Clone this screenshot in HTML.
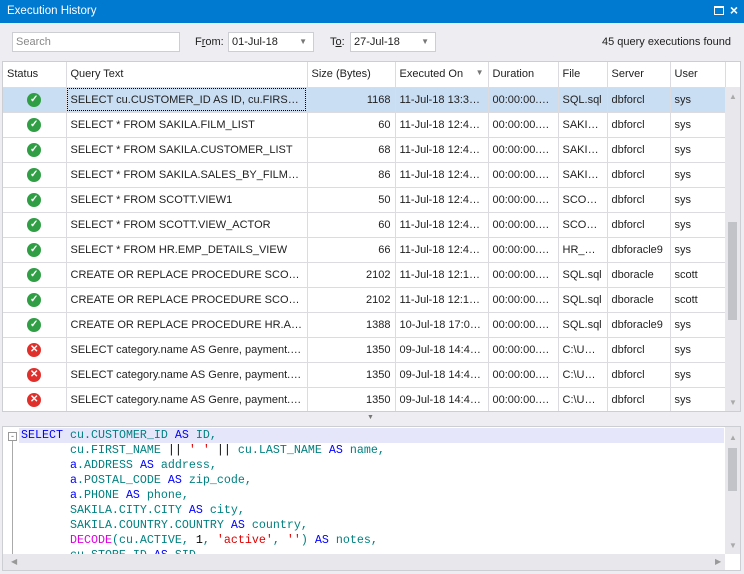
<!DOCTYPE html><html><head><style>
*{margin:0;padding:0;box-sizing:border-box}
body{width:744px;height:574px;background:#eeeef2;font-family:"Liberation Sans",sans-serif;font-size:11px;color:#1e1e1e;position:relative;overflow:hidden}
.abs{position:absolute}
.title{left:0;top:0;width:744px;height:23px;background:#0079d0;color:#fff;padding:5px 7px;font-size:11.5px}
.inp{background:#fff;border:1px solid #ccced4;height:20px;padding:3px 3px;font-size:11px}
.grid{left:2px;top:61px;width:739px;height:351px;background:#fff;border:1px solid #ccced4;overflow:hidden}
table{border-collapse:collapse;table-layout:fixed;font-size:11px}
td,th{height:25px;border-right:1px solid #dcdce0;border-bottom:1px solid #dcdce0;padding:0 4px;white-space:nowrap;overflow:hidden;text-overflow:ellipsis;font-weight:normal;text-align:left}
th{height:25px;background:#fff}
tr.sel td{background:#c9ddf3}
.r{text-align:right}
.ic{display:block;margin:auto;width:14px;height:14px;border-radius:50%;color:#fff;font-size:10px;line-height:14px;text-align:center;font-weight:bold}
.ok{background:#2f9e44}.er{background:#e0302c}
.code{left:2px;top:426px;width:739px;height:145px;background:#fff;border:1px solid #ccced4;overflow:hidden}
pre{font-family:"Liberation Mono",monospace;font-size:11.66px;line-height:15px;position:absolute;left:18px;top:1px;color:#008080}
.k{color:#0000ff}.s{color:#e00000}.m{color:#e000e0}.n{color:#000}
.sb{color:#aaa;font-size:8px}
</style></head><body>
<div class="abs title">Execution History<span class="abs" style="right:20px;top:6px;width:10px;height:9px;border:1px solid #fff;border-top-width:2px"></span><span class="abs" style="right:6px;top:2px;font-size:14px;font-weight:bold">×</span></div>
<div class="abs inp" style="left:12px;top:32px;width:168px;color:#888">Search</div>
<div class="abs" style="left:195px;top:36px">F<u>r</u>om:</div>
<div class="abs inp" style="left:228px;top:32px;width:86px">01-Jul-18<span class="abs" style="right:6px;top:4px;color:#777;font-size:8px">▼</span></div>
<div class="abs" style="left:330px;top:36px">T<u>o</u>:</div>
<div class="abs inp" style="left:350px;top:32px;width:86px">27-Jul-18<span class="abs" style="right:6px;top:4px;color:#777;font-size:8px">▼</span></div>
<div class="abs" style="right:13px;top:36px">45 query executions found</div>
<div class="abs grid">
<table style="width:722px">
<colgroup><col style="width:63px"><col style="width:241px"><col style="width:88px"><col style="width:93px"><col style="width:70px"><col style="width:49px"><col style="width:63px"><col style="width:55px"></colgroup>
<tr><th>Status</th><th>Query Text</th><th>Size (Bytes)</th><th>Executed On <span style="color:#777;font-size:8px;float:right">▼</span></th><th>Duration</th><th>File</th><th>Server</th><th>User</th></tr>
<tr class="sel"><td><span class="ic ok">✓</span></td><td style="outline:1px dotted #000;outline-offset:-2px">SELECT cu.CUSTOMER_ID AS ID, cu.FIRST_NAME</td><td class="r">1168</td><td>11-Jul-18 13:3…</td><td>00:00:00.…</td><td>SQL.sql</td><td>dbforcl</td><td>sys</td></tr>
<tr><td><span class="ic ok">✓</span></td><td>SELECT * FROM SAKILA.FILM_LIST</td><td class="r">60</td><td>11-Jul-18 12:4…</td><td>00:00:00.…</td><td>SAKI…</td><td>dbforcl</td><td>sys</td></tr>
<tr><td><span class="ic ok">✓</span></td><td>SELECT * FROM SAKILA.CUSTOMER_LIST</td><td class="r">68</td><td>11-Jul-18 12:4…</td><td>00:00:00.…</td><td>SAKI…</td><td>dbforcl</td><td>sys</td></tr>
<tr><td><span class="ic ok">✓</span></td><td>SELECT * FROM SAKILA.SALES_BY_FILM_CATEGORY</td><td class="r">86</td><td>11-Jul-18 12:4…</td><td>00:00:00.…</td><td>SAKI…</td><td>dbforcl</td><td>sys</td></tr>
<tr><td><span class="ic ok">✓</span></td><td>SELECT * FROM SCOTT.VIEW1</td><td class="r">50</td><td>11-Jul-18 12:4…</td><td>00:00:00.…</td><td>SCOT…</td><td>dbforcl</td><td>sys</td></tr>
<tr><td><span class="ic ok">✓</span></td><td>SELECT * FROM SCOTT.VIEW_ACTOR</td><td class="r">60</td><td>11-Jul-18 12:4…</td><td>00:00:00.…</td><td>SCOT…</td><td>dbforcl</td><td>sys</td></tr>
<tr><td><span class="ic ok">✓</span></td><td>SELECT * FROM HR.EMP_DETAILS_VIEW</td><td class="r">66</td><td>11-Jul-18 12:4…</td><td>00:00:00.…</td><td>HR_E…</td><td>dbforacle9</td><td>sys</td></tr>
<tr><td><span class="ic ok">✓</span></td><td>CREATE OR REPLACE PROCEDURE SCOTT.EMP_PROC</td><td class="r">2102</td><td>11-Jul-18 12:1…</td><td>00:00:00.…</td><td>SQL.sql</td><td>dboracle</td><td>scott</td></tr>
<tr><td><span class="ic ok">✓</span></td><td>CREATE OR REPLACE PROCEDURE SCOTT.EMP_PROC</td><td class="r">2102</td><td>11-Jul-18 12:1…</td><td>00:00:00.…</td><td>SQL.sql</td><td>dboracle</td><td>scott</td></tr>
<tr><td><span class="ic ok">✓</span></td><td>CREATE OR REPLACE PROCEDURE HR.ADD_JOB</td><td class="r">1388</td><td>10-Jul-18 17:0…</td><td>00:00:00.…</td><td>SQL.sql</td><td>dbforacle9</td><td>sys</td></tr>
<tr><td><span class="ic er">✕</span></td><td>SELECT category.name AS Genre, payment.amount</td><td class="r">1350</td><td>09-Jul-18 14:4…</td><td>00:00:00.…</td><td>C:\U…</td><td>dbforcl</td><td>sys</td></tr>
<tr><td><span class="ic er">✕</span></td><td>SELECT category.name AS Genre, payment.amount</td><td class="r">1350</td><td>09-Jul-18 14:4…</td><td>00:00:00.…</td><td>C:\U…</td><td>dbforcl</td><td>sys</td></tr>
<tr><td><span class="ic er">✕</span></td><td>SELECT category.name AS Genre, payment.amount</td><td class="r">1350</td><td>09-Jul-18 14:4…</td><td>00:00:00.…</td><td>C:\U…</td><td>dbforcl</td><td>sys</td></tr>
</table>
<div class="abs" style="left:722px;top:25px;width:16px;height:325px;background:#e8e8ec"></div>
<div class="abs sb" style="left:726px;top:30px">▲</div>
<div class="abs sb" style="left:726px;top:336px">▼</div>
<div class="abs" style="left:725px;top:160px;width:9px;height:98px;background:#c2c3c9"></div>
</div>
<div class="abs" style="left:367px;top:414px;color:#777;font-size:7px">▼</div>
<div class="abs code">
<div class="abs" style="left:16px;top:1px;width:705px;height:15px;background:#e6e6fa"></div>
<div class="abs" style="left:5px;top:5px;width:9px;height:9px;border:1px solid #999;background:#fff;font-size:9px;line-height:6px;text-align:center;color:#666">-</div>
<div class="abs" style="left:9px;top:14px;width:1px;height:115px;background:#aaa"></div>
<pre><span class="k">SELECT</span> cu.CUSTOMER_ID <span class="k">AS</span> ID,
       cu.FIRST_NAME <span class="n">||</span> <span class="s">' '</span> <span class="n">||</span> cu.LAST_NAME <span class="k">AS</span> name,
       <span class="k">a</span>.ADDRESS <span class="k">AS</span> address,
       <span class="k">a</span>.POSTAL_CODE <span class="k">AS</span> zip_code,
       <span class="k">a</span>.PHONE <span class="k">AS</span> phone,
       SAKILA.CITY.CITY <span class="k">AS</span> city,
       SAKILA.COUNTRY.COUNTRY <span class="k">AS</span> country,
       <span class="m">DECODE</span>(cu.ACTIVE, <span class="n">1</span>, <span class="s">'active'</span>, <span class="s">''</span>) <span class="k">AS</span> notes,
       cu.STORE_ID <span class="k">AS</span> SID</pre>
<div class="abs" style="left:722px;top:0;width:16px;height:127px;background:#e8e8ec"></div>
<div class="abs sb" style="left:726px;top:6px">▲</div>
<div class="abs sb" style="left:726px;top:114px">▼</div>
<div class="abs" style="left:725px;top:21px;width:9px;height:43px;background:#c2c3c9"></div>
<div class="abs" style="left:0;top:127px;width:722px;height:17px;background:#e8e8ec"></div>
<div class="abs" style="left:8px;top:130px;color:#999;font-size:8px">◀</div>
<div class="abs" style="left:712px;top:130px;color:#999;font-size:8px">▶</div>
</div>
</body></html>
